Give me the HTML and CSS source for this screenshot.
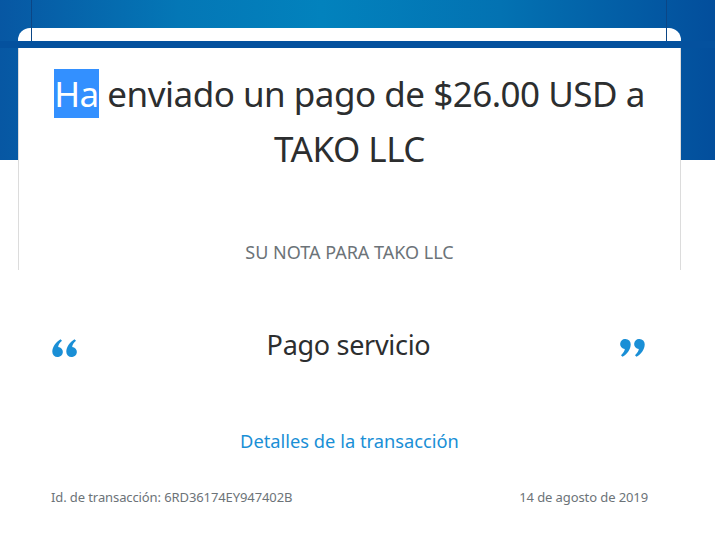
FILE: index.html
```html
<!DOCTYPE html>
<html lang="es">
<head>
<meta charset="utf-8">
<title>Pago enviado</title>
<link rel="stylesheet" href="styles.css">
</head>
<body>
<div class="page">
  <div class="top">
    <div class="strip"></div>
  </div>
  <div class="band"></div>
  <div class="card">
    <h1 class="title"><span class="sel">Ha</span> enviado un pago de $26.00 USD a TAKO LLC</h1>
    <p class="note-label">SU NOTA PARA TAKO LLC</p>
  </div>
  <div class="quote-row">
    <svg class="q" width="26" height="18" viewBox="0 0 26 18" aria-hidden="true">
      <path d="M5.5 18a5.2 5.2 0 0 1-5.2-5.4C.3 8 3.8 3 8.5.2l1.5 1.6C7.6 4 6.4 5.8 6.2 8a5 5 0 0 1-.7 10z" fill="#1a8fd6"/>
      <path d="M19.5 18a5.2 5.2 0 0 1-5.2-5.4C14.3 8 17.8 3 22.5.2l1.5 1.6C21.6 4 20.4 5.8 20.2 8a5 5 0 0 1-.7 10z" fill="#1a8fd6"/>
    </svg>
    <p class="memo">Pago servicio</p>
    <svg class="q" width="26" height="18" viewBox="0 0 26 18" aria-hidden="true">
      <g transform="rotate(180 13 9)">
        <path d="M5.5 18a5.2 5.2 0 0 1-5.2-5.4C.3 8 3.8 3 8.5.2l1.5 1.6C7.6 4 6.4 5.8 6.2 8a5 5 0 0 1-.7 10z" fill="#1a8fd6"/>
        <path d="M19.5 18a5.2 5.2 0 0 1-5.2-5.4C14.3 8 17.8 3 22.5.2l1.5 1.6C21.6 4 20.4 5.8 20.2 8a5 5 0 0 1-.7 10z" fill="#1a8fd6"/>
      </g>
    </svg>
  </div>
  <a class="details" href="#">Detalles de la transacción</a>
  <div class="meta">
    <span>Id. de transacción: 6RD36174EY947402B</span>
    <span>14 de agosto de 2019</span>
  </div>
</div>
</body>
</html>
```

FILE: styles.css
```css
* { box-sizing: border-box; }
html, body { margin: 0; padding: 0; background: #fff; }
body { font-family: "Noto Sans", "Open Sans", sans-serif; color: #2c2e2f; }

.page {
  width: 715px;
  height: 546px;
  overflow: hidden;
  background:
    linear-gradient(to right, #0757a3 0%, #0477b6 25%, #0282bd 45%, #0372b2 70%, #034e9c 100%) top / 100% 160px no-repeat,
    #fff;
}

.top {
  height: 41px;
  padding-top: 28px;
  background:
    linear-gradient(#0b4686, #0b4686) 31px 0 / 1px 41px no-repeat,
    linear-gradient(#0b4686, #0b4686) 666px 0 / 1px 41px no-repeat;
}
.strip {
  height: 13px;
  margin: 0 34px 0 18px;
  border-radius: 12px 12px 0 0;
  background:
    linear-gradient(#0b4686, #0b4686) 13px 0 / 1px 13px no-repeat,
    linear-gradient(#0b4686, #0b4686) 648px 0 / 1px 13px no-repeat,
    #fff;
}
.band {
  height: 7px;
  background: #04519e;
}

.card {
  margin: 0 34px 0 18px;
  height: 222px;
  background: #fff;
  border-left: 1px solid #dcdcdc;
  border-right: 1px solid #dcdcdc;
  padding-top: 18px;
  text-align: center;
}
.title {
  margin: 0;
  font-size: 35px;
  letter-spacing: -0.5px;
  line-height: 55px;
  font-weight: 400;
  color: #2c2e2f;
  padding: 0 20px;
}
.sel {
  background: #3390ff;
  color: #fff;
  padding: 1px 0;
}
.note-label {
  margin: 64px 0 0;
  font-size: 18px;
  line-height: 24px;
  color: #6c7378;
}

.quote-row {
  margin: 55px 70px 0 52px;
  height: 40px;
  display: flex;
  align-items: center;
  justify-content: space-between;
}
.q { display: block; margin-top: 6px; }
.memo {
  margin: 0;
  font-size: 27px;
  letter-spacing: -0.3px;
  line-height: 40px;
  color: #2c2e2f;
}

.details {
  display: block;
  margin: 64px 34px 0 18px;
  text-align: center;
  font-size: 18.3px;
  line-height: 24px;
  color: #1a8fd6;
  text-decoration: none;
}

.meta {
  margin: 35px 67px 0 51px;
  display: flex;
  justify-content: space-between;
  font-size: 13px;
  letter-spacing: -0.1px;
  line-height: 18px;
  color: #6c7378;
}
```
